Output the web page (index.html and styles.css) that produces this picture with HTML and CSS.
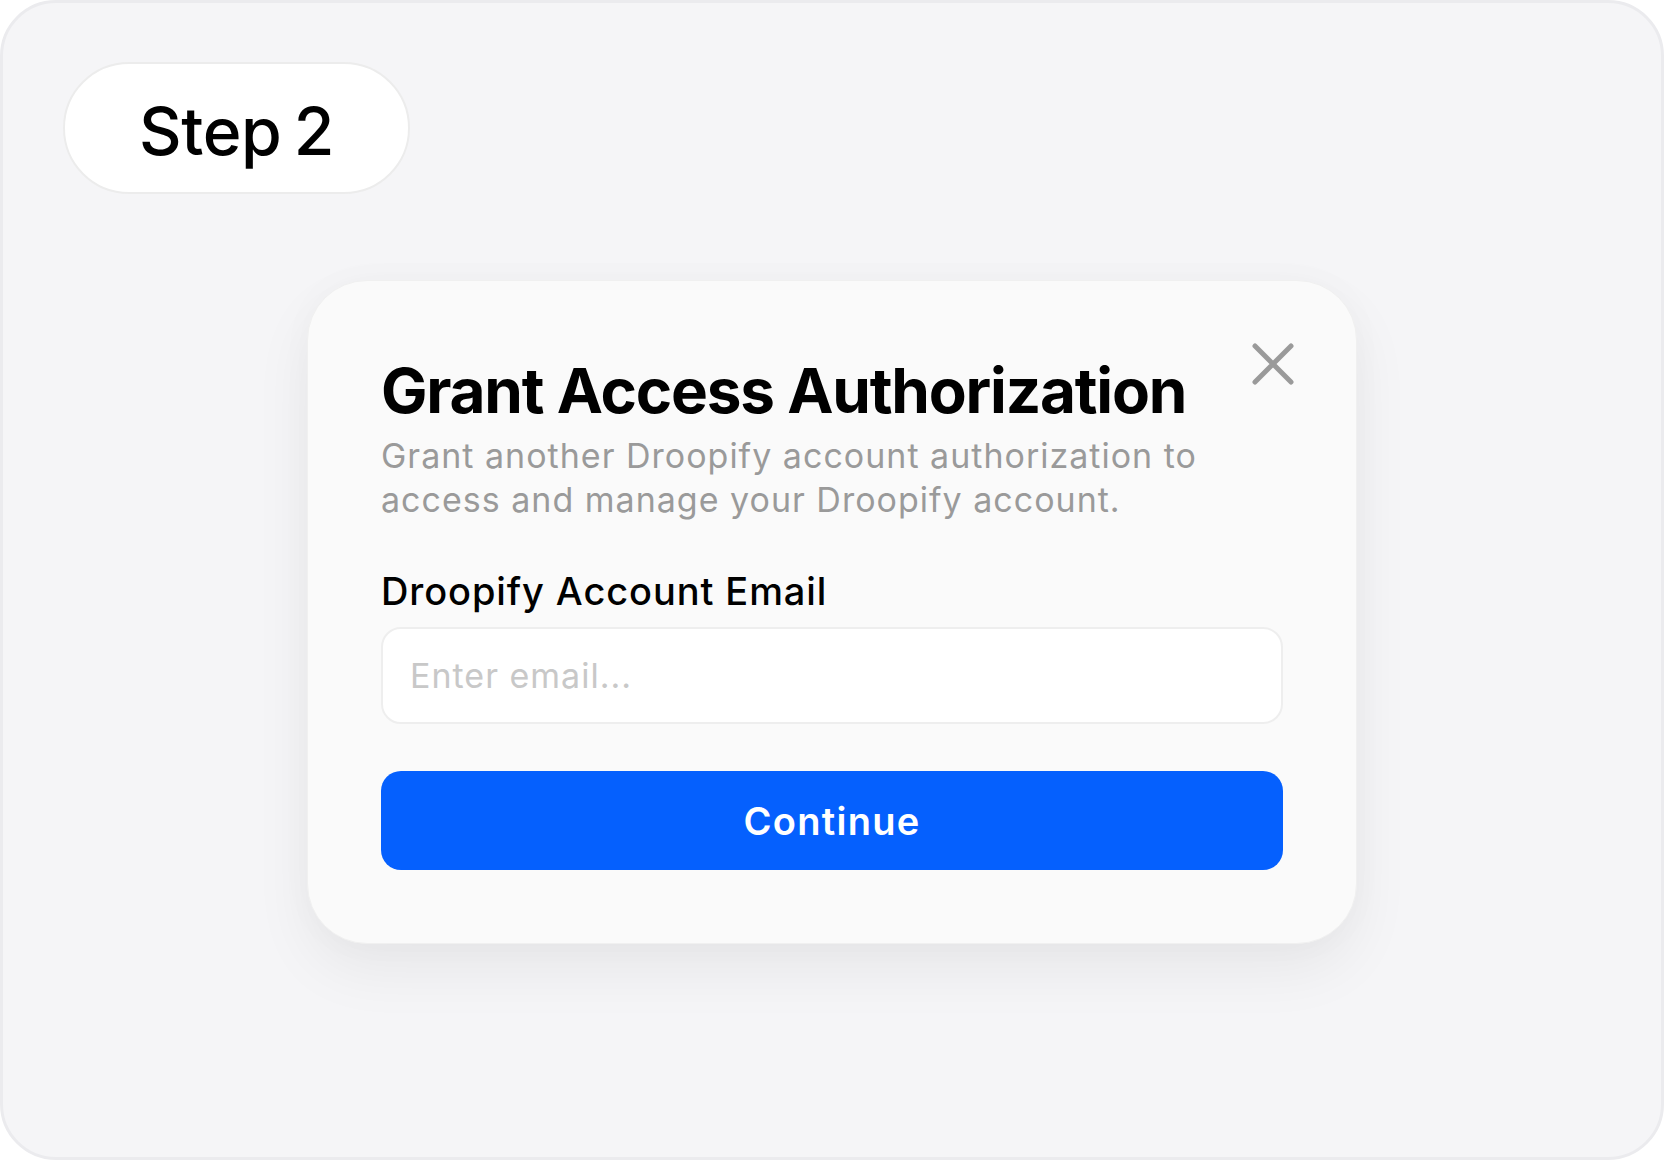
FILE: index.html
```html
<!DOCTYPE html>
<html lang="en">
<head>
<meta charset="utf-8">
<title>Grant Access Authorization</title>
<link rel="stylesheet" href="styles.css">
</head>
<body>
<div class="frame">
  <div class="header">
    <div class="pill">Step 2</div>
  </div>
  <div class="stage">
    <div class="modal">
      <button class="close" aria-label="Close">
        <svg width="42" height="42" viewBox="0 0 42 42" fill="none" stroke="#9a9a9a" stroke-width="5" stroke-linecap="round">
          <path d="M3 3 L39 39 M39 3 L3 39"/>
        </svg>
      </button>
      <h1 class="title">Grant Access Authorization</h1>
      <p class="subtitle">Grant another Droopify account authorization to access and manage your Droopify account.</p>
      <label class="label" for="email">Droopify Account Email</label>
      <input class="input" id="email" type="email" placeholder="Enter email...">
      <button class="primary">Continue</button>
    </div>
  </div>
</div>
</body>
</html>
```

FILE: styles.css
```css
* { box-sizing: border-box; }

html, body {
  margin: 0;
  padding: 0;
  background: #ffffff;
  font-family: Inter, "Noto Sans", "Liberation Sans", sans-serif;
}

.frame {
  width: 1664px;
  height: 1160px;
  border: 3px solid #ebebee;
  border-radius: 56px;
  background: #f5f5f7;
  padding-top: 59px;
  display: flex;
  flex-direction: column;
  overflow: hidden;
}

.header {
  padding-left: 60px;
  display: flex;
}

.pill {
  width: 347px;
  height: 132px;
  border: 2px solid #ececec;
  border-radius: 66px;
  background: #ffffff;
  display: flex;
  align-items: center;
  justify-content: center;
  padding-top: 6px;
  font-size: 66px;
  font-weight: 500;
  color: #000;
  letter-spacing: -0.4px;
  word-spacing: -5px;
}

.stage {
  display: flex;
  justify-content: center;
  margin-top: 86px;
}

.modal {
  position: relative;
  width: 1050px;
  padding: 73px;
  border: 1px solid #f0f0f0;
  border-radius: 60px;
  background: #fafafa;
  display: flex;
  flex-direction: column;
  box-shadow: 0 26px 60px rgba(0, 0, 0, 0.06), 0 0 36px rgba(0, 0, 0, 0.025);
}

.close {
  position: absolute;
  top: 62px;
  right: 62px;
  width: 42px;
  height: 42px;
  padding: 0;
  border: 0;
  background: none;
  display: flex;
}

.title {
  margin: 0;
  font-size: 62px;
  line-height: 74px;
  font-weight: 700;
  color: #000;
  letter-spacing: -1.2px;
}

.subtitle {
  margin: 6px 0 0;
  font-size: 34px;
  line-height: 44px;
  font-weight: 400;
  color: #9a9a9a;
  letter-spacing: 1px;
  max-width: 880px;
}

.label {
  margin-top: 46px;
  font-size: 38px;
  line-height: 46px;
  font-weight: 500;
  color: #000;
  letter-spacing: 0.9px;
}

.input {
  margin-top: 13px;
  width: 100%;
  height: 97px;
  border: 2px solid #eeeeee;
  border-radius: 20px;
  background: #ffffff;
  padding: 0 27px;
  font-family: Inter, "Noto Sans", "Liberation Sans", sans-serif;
  font-size: 34px;
  letter-spacing: 1px;
  color: #000;
  outline: none;
}

.input::placeholder {
  color: #c8c8c8;
}

.primary {
  margin-top: 47px;
  width: 100%;
  height: 99px;
  border: 0;
  border-radius: 20px;
  background: #0560fe;
  color: #ffffff;
  font-family: Inter, "Noto Sans", "Liberation Sans", sans-serif;
  font-size: 38px;
  font-weight: 600;
  letter-spacing: 1.3px;
  cursor: pointer;
}
```
